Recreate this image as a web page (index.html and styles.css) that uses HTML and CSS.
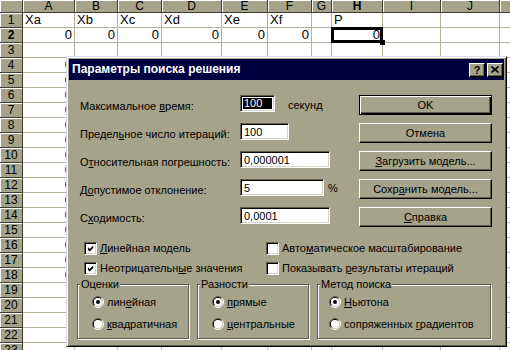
FILE: index.html
```html
<!DOCTYPE html>
<html lang="ru">
<head>
<meta charset="utf-8">
<title>Поиск решения</title>
<link rel="stylesheet" href="styles.css">
</head>
<body>
<div class="sheet">
  <div class="grid">
    <div class="hd"></div><div class="hd">A</div><div class="hd">B</div><div class="hd">C</div><div class="hd">D</div><div class="hd">E</div><div class="hd">F</div><div class="hd">G</div><div class="hd b">H</div><div class="hd">I</div><div class="hd">J</div><div class="hd"></div>
    <div class="hd">1</div><div>Xa</div><div>Xb</div><div>Xc</div><div>Xd</div><div>Xe</div><div>Xf</div><div></div><div>P</div><div></div><div></div><div></div>
    <div class="hd b">2</div><div class="n">0</div><div class="n">0</div><div class="n">0</div><div class="n">0</div><div class="n">0</div><div class="n">0</div><div></div><div class="n active">0</div><div></div><div></div><div></div>
    <div class="hd">3</div><div></div><div></div><div></div><div></div><div></div><div></div><div></div><div></div><div></div><div></div><div></div>
    <div class="hd">4</div><div class="n">0</div><div></div><div></div><div></div><div></div><div></div><div></div><div></div><div></div><div></div><div></div>
    <div class="hd">5</div><div class="n">0</div><div></div><div></div><div></div><div></div><div></div><div></div><div></div><div></div><div></div><div></div>
    <div class="hd">6</div><div class="n">0</div><div></div><div></div><div></div><div></div><div></div><div></div><div></div><div></div><div></div><div></div>
    <div class="hd">7</div><div class="n">0</div><div></div><div></div><div></div><div></div><div></div><div></div><div></div><div></div><div></div><div></div>
    <div class="hd">8</div><div class="n">0</div><div></div><div></div><div></div><div></div><div></div><div></div><div></div><div></div><div></div><div></div>
    <div class="hd">9</div><div class="n">0</div><div></div><div></div><div></div><div></div><div></div><div></div><div></div><div></div><div></div><div></div>
    <div class="hd">10</div><div class="n">0</div><div></div><div></div><div></div><div></div><div></div><div></div><div></div><div></div><div></div><div></div>
    <div class="hd">11</div><div class="n">0</div><div></div><div></div><div></div><div></div><div></div><div></div><div></div><div></div><div></div><div></div>
    <div class="hd">12</div><div class="n">0</div><div></div><div></div><div></div><div></div><div></div><div></div><div></div><div></div><div></div><div></div>
    <div class="hd">13</div><div class="n">0</div><div></div><div></div><div></div><div></div><div></div><div></div><div></div><div></div><div></div><div></div>
    <div class="hd">14</div><div class="n">0</div><div></div><div></div><div></div><div></div><div></div><div></div><div></div><div></div><div></div><div></div>
    <div class="hd">15</div><div class="n">0</div><div></div><div></div><div></div><div></div><div></div><div></div><div></div><div></div><div></div><div></div>
    <div class="hd">16</div><div class="n">0</div><div></div><div></div><div></div><div></div><div></div><div></div><div></div><div></div><div></div><div></div>
    <div class="hd">17</div><div class="n">0</div><div></div><div></div><div></div><div></div><div></div><div></div><div></div><div></div><div></div><div></div>
    <div class="hd">18</div><div class="n">0</div><div></div><div></div><div></div><div></div><div></div><div></div><div></div><div></div><div></div><div></div>
    <div class="hd">19</div><div></div><div></div><div></div><div></div><div></div><div></div><div></div><div></div><div></div><div></div><div></div>
    <div class="hd">20</div><div></div><div></div><div></div><div></div><div></div><div></div><div></div><div></div><div></div><div></div><div></div>
    <div class="hd">21</div><div></div><div></div><div></div><div></div><div></div><div></div><div></div><div></div><div></div><div></div><div></div>
    <div class="hd">22</div><div></div><div></div><div></div><div></div><div></div><div></div><div></div><div></div><div></div><div></div><div></div>
    <div class="hd">23</div><div></div><div></div><div></div><div></div><div></div><div></div><div></div><div></div><div></div><div></div><div></div>
  </div>

  <div class="dialog">
    <div class="title">
      <span class="ttext">Параметры поиска решения</span>
      <div class="capbtns">
        <span class="cb help">?</span>
        <span class="cb"><svg width="8" height="7" viewBox="0 0 8 7"><path d="M0.5 0.5L7.5 6.5M7.5 0.5L0.5 6.5" stroke="#000" stroke-width="1.6" fill="none"/></svg></span>
      </div>
    </div>

    <div class="top">
      <div class="fields">
        <div class="row"><span class="lbl">Максимальное <u>в</u>ремя:</span><span class="edit w1"><span class="hl">100</span></span><span class="unit">секунд</span></div>
        <div class="row"><span class="lbl">Предел<u>ь</u>ное число итераций:</span><span class="edit w2">100</span></div>
        <div class="row"><span class="lbl">О<u>т</u>носительная погрешность:</span><span class="edit w3">0,000001</span></div>
        <div class="row"><span class="lbl">Д<u>о</u>пустимое отклонение:</span><span class="edit w4">5</span><span class="pct">%</span></div>
        <div class="row"><span class="lbl">С<u>х</u>одимость:</span><span class="edit w3">0,0001</span></div>
      </div>
      <div class="buttons">
        <div class="btn def">OK</div>
        <div class="btn">Отмена</div>
        <div class="btn"><u>З</u>агрузить модель...</div>
        <div class="btn">Сохр<u>а</u>нить модель...</div>
        <div class="btn"><u>С</u>правка</div>
      </div>
    </div>

    <div class="checks">
      <div class="chk"><span class="box"><svg width="9" height="9" viewBox="0 0 9 9"><path d="M1 3L3 5L7 1L7 4L3 8L1 6Z" fill="#000"/></svg></span><span><u>Л</u>инейная модель</span></div>
      <div class="chk"><span class="box"></span><span>Авто<u>м</u>атическое масштабирование</span></div>
      <div class="chk"><span class="box"><svg width="9" height="9" viewBox="0 0 9 9"><path d="M1 3L3 5L7 1L7 4L3 8L1 6Z" fill="#000"/></svg></span><span>Неотрицательн<u>ы</u>е значения</span></div>
      <div class="chk"><span class="box"></span><span>Показывать <u>р</u>езультаты итераций</span></div>
    </div>

    <div class="groups">
      <fieldset class="grp g1">
        <legend>Оценки</legend>
        <div class="radio"><svg width="12" height="12" viewBox="0 0 12 12"><path d="M2.1 9.9A5.5 5.5 0 0 1 9.9 2.1" fill="none" stroke="#5e5c4e"/><path d="M9.9 2.1A5.5 5.5 0 0 1 2.1 9.9" fill="none" stroke="#fff"/><path d="M2.8 9.2A4.5 4.5 0 0 1 9.2 2.8" fill="none" stroke="#000"/><path d="M9.2 2.8A4.5 4.5 0 0 1 2.8 9.2" fill="none" stroke="#d6d4c2"/><circle cx="6" cy="6" r="4" fill="#fff"/><circle cx="6" cy="6" r="2" fill="#000"/></svg><span>лин<u>е</u>йная</span></div>
        <div class="radio"><svg width="12" height="12" viewBox="0 0 12 12"><path d="M2.1 9.9A5.5 5.5 0 0 1 9.9 2.1" fill="none" stroke="#5e5c4e"/><path d="M9.9 2.1A5.5 5.5 0 0 1 2.1 9.9" fill="none" stroke="#fff"/><path d="M2.8 9.2A4.5 4.5 0 0 1 9.2 2.8" fill="none" stroke="#000"/><path d="M9.2 2.8A4.5 4.5 0 0 1 2.8 9.2" fill="none" stroke="#d6d4c2"/><circle cx="6" cy="6" r="4" fill="#fff"/></svg><span><u>к</u>вадратичная</span></div>
      </fieldset>
      <fieldset class="grp g2">
        <legend>Разности</legend>
        <div class="radio"><svg width="12" height="12" viewBox="0 0 12 12"><path d="M2.1 9.9A5.5 5.5 0 0 1 9.9 2.1" fill="none" stroke="#5e5c4e"/><path d="M9.9 2.1A5.5 5.5 0 0 1 2.1 9.9" fill="none" stroke="#fff"/><path d="M2.8 9.2A4.5 4.5 0 0 1 9.2 2.8" fill="none" stroke="#000"/><path d="M9.2 2.8A4.5 4.5 0 0 1 2.8 9.2" fill="none" stroke="#d6d4c2"/><circle cx="6" cy="6" r="4" fill="#fff"/><circle cx="6" cy="6" r="2" fill="#000"/></svg><span><u>п</u>рямые</span></div>
        <div class="radio"><svg width="12" height="12" viewBox="0 0 12 12"><path d="M2.1 9.9A5.5 5.5 0 0 1 9.9 2.1" fill="none" stroke="#5e5c4e"/><path d="M9.9 2.1A5.5 5.5 0 0 1 2.1 9.9" fill="none" stroke="#fff"/><path d="M2.8 9.2A4.5 4.5 0 0 1 9.2 2.8" fill="none" stroke="#000"/><path d="M9.2 2.8A4.5 4.5 0 0 1 2.8 9.2" fill="none" stroke="#d6d4c2"/><circle cx="6" cy="6" r="4" fill="#fff"/></svg><span><u>ц</u>ентральные</span></div>
      </fieldset>
      <fieldset class="grp g3">
        <legend>Метод поиска</legend>
        <div class="radio"><svg width="12" height="12" viewBox="0 0 12 12"><path d="M2.1 9.9A5.5 5.5 0 0 1 9.9 2.1" fill="none" stroke="#5e5c4e"/><path d="M9.9 2.1A5.5 5.5 0 0 1 2.1 9.9" fill="none" stroke="#fff"/><path d="M2.8 9.2A4.5 4.5 0 0 1 9.2 2.8" fill="none" stroke="#000"/><path d="M9.2 2.8A4.5 4.5 0 0 1 2.8 9.2" fill="none" stroke="#d6d4c2"/><circle cx="6" cy="6" r="4" fill="#fff"/><circle cx="6" cy="6" r="2" fill="#000"/></svg><span><u>Н</u>ьютона</span></div>
        <div class="radio"><svg width="12" height="12" viewBox="0 0 12 12"><path d="M2.1 9.9A5.5 5.5 0 0 1 9.9 2.1" fill="none" stroke="#5e5c4e"/><path d="M9.9 2.1A5.5 5.5 0 0 1 2.1 9.9" fill="none" stroke="#fff"/><path d="M2.8 9.2A4.5 4.5 0 0 1 9.2 2.8" fill="none" stroke="#000"/><path d="M9.2 2.8A4.5 4.5 0 0 1 2.8 9.2" fill="none" stroke="#d6d4c2"/><circle cx="6" cy="6" r="4" fill="#fff"/></svg><span>сопряженных <u>г</u>радиентов</span></div>
      </fieldset>
    </div>
  </div>
</div>
</body>
</html>
```

FILE: styles.css
```css
* { box-sizing: border-box; }
html, body { margin: 0; padding: 0; }
body {
  width: 510px;
  height: 350px;
  overflow: hidden;
  background: #fff;
  font-family: "Liberation Sans", Arial, sans-serif;
  color: #000;
}
.sheet {
  position: relative;
  width: 510px;
  height: 350px;
  overflow: hidden;
}

/* ---------- spreadsheet ---------- */
.grid {
  display: grid;
  grid-template-columns: 23px 52px 43px 44px 60px 46px 44px 20px 51px 58px 59px 40px;
  grid-template-rows: 13px repeat(23, 15px);
  width: 540px;
  font-size: 13px;
  line-height: 14px;
}
.grid > div {
  border-right: 1px solid #b4b29c;
  border-bottom: 1px solid #b4b29c;
  padding: 0 2px;
  white-space: nowrap;
}
.grid > .hd {
  background: #a5a38a;
  text-align: center;
  font-size: 12px;
  line-height: 14px;
  border-right: 1px solid #3e3d32;
  border-bottom: 1px solid #3e3d32;
  box-shadow: inset 1px 1px 0 #fff;
  padding: 0;
}
.grid > .hd:nth-child(-n+12) { line-height: 12px; }
.grid > .b { font-weight: bold; }
.grid > .n { text-align: right; }
.grid > .active { position: relative; }
.grid > .active::after {
  content: "";
  position: absolute;
  left: -1px; top: -1px; right: -1px; bottom: -1px;
  border: 3px solid #000;
}
.grid > .active::before {
  content: "";
  position: absolute;
  right: -3px; bottom: -3px;
  width: 5px; height: 5px;
  background: #000;
  z-index: 1;
}

/* ---------- dialog ---------- */
.dialog {
  position: absolute;
  left: 66px;
  top: 56px;
  width: 441px;
  height: 291px;
  background: #a5a38a;
  border: 1px solid;
  border-color: #dcdcf0 #000 #000 #dcdcf0;
  box-shadow: inset 1px 1px 0 #fff, inset -1px -1px 0 #5e5c4e;
  padding: 2px;
  font-size: 11px;
  line-height: 13px;
}
.title {
  height: 21px;
  background: #000040;
  color: #fff;
  display: flex;
  align-items: center;
  justify-content: space-between;
  padding-left: 3px;
  padding-right: 1px;
}
.ttext { font-weight: bold; font-size: 12px; }
.capbtns { display: flex; gap: 2px; }
.cb {
  width: 16px;
  height: 14px;
  background: #a5a38a;
  border: 1px solid;
  border-color: #fff #000 #000 #fff;
  box-shadow: inset -1px -1px 0 #5e5c4e;
  display: flex;
  align-items: center;
  justify-content: center;
  color: #000;
}
.cb.help { font-weight: bold; font-size: 11px; line-height: 12px; }

.top {
  display: flex;
  height: 155px;
  padding: 15px 0 0 11px;
}
.fields { width: 279px; }
.row {
  display: flex;
  align-items: flex-start;
  height: 28px;
}
.lbl { width: 160px; margin-top: 5px; white-space: nowrap; }
.edit {
  height: 17px;
  background: #fff;
  border: 1px solid;
  border-color: #5e5c4e #fff #fff #5e5c4e;
  box-shadow: inset 1px 1px 0 #000, inset -1px -1px 0 #d6d4c2;
  padding: 1px 2px 0 3px;
  line-height: 14px;
}
.w1 { width: 35px; padding: 2px; }
.w2 { width: 49px; }
.w3 { width: 90px; }
.w4 { width: 84px; }
.hl {
  display: block;
  background: #000;
  color: #fff;
  height: 11px;
  line-height: 11px;
  padding-left: 1px;
}
.unit { margin-left: 13px; margin-top: 4px; }
.pct { margin-left: 4px; margin-top: 3px; }

.buttons {
  width: 133px;
  display: flex;
  flex-direction: column;
  gap: 8px;
}
.btn {
  height: 20px;
  background: #a5a38a;
  border: 1px solid;
  border-color: #fff #000 #000 #fff;
  box-shadow: inset -1px -1px 0 #5e5c4e;
  text-align: center;
  line-height: 18px;
  white-space: nowrap;
}
.btn.def {
  border-color: #000;
  box-shadow: inset 1px 1px 0 #fff, inset -1px -1px 0 #000, inset -2px -2px 0 #5e5c4e;
}

.checks {
  display: grid;
  grid-template-columns: 182px 1fr;
  grid-auto-rows: 20px;
  margin-top: 3px;
  padding-left: 15px;
}
.chk {
  display: flex;
  align-items: center;
  gap: 3px;
  white-space: nowrap;
}
.box {
  width: 13px;
  height: 13px;
  background: #fff;
  border: 1px solid;
  border-color: #5e5c4e #fff #fff #5e5c4e;
  box-shadow: inset 1px 1px 0 #000, inset -1px -1px 0 #d6d4c2;
  padding: 1px;
  display: flex;
}
.box svg { display: block; margin: 0 0 0 1px; }

.groups {
  display: flex;
  gap: 8px;
  padding-left: 8px;
}
.grp {
  margin: 0;
  height: 61px;
  padding: 1px 0 2px 0;
  border: 1px solid #5e5c4e;
  box-shadow: inset 1px 1px 0 #fff, 1px 1px 0 #fff;
}
.g1 { width: 112px; }
.g2 { width: 112px; }
.g3 { width: 174px; }
.grp legend {
  padding: 0 1px;
  margin-left: 2px;
  line-height: 12px;
  background: #a5a38a;
}
.radio {
  display: flex;
  align-items: center;
  gap: 3px;
  height: 22px;
  padding-left: 14px;
  white-space: nowrap;
}
.g3 .radio { padding-left: 11px; }
.radio svg { display: block; flex: none; }
```
